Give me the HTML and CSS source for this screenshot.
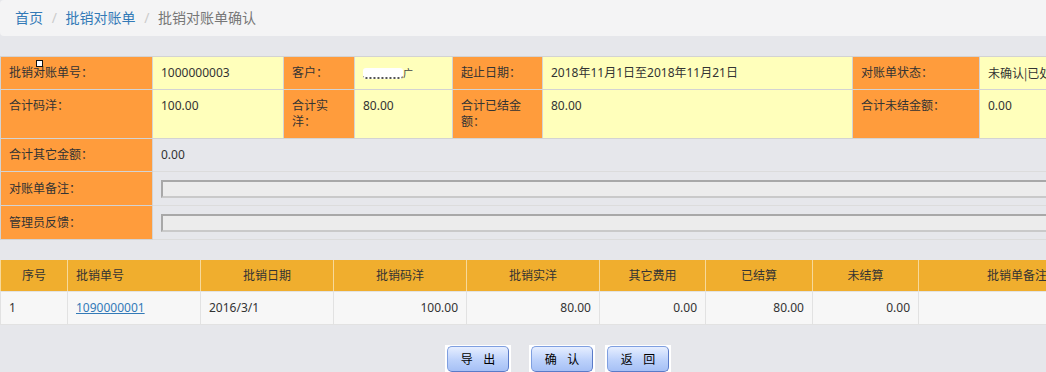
FILE: index.html
```html
<!DOCTYPE html>
<html lang="zh-CN">
<head>
    <meta charset="UTF-8">
    <title>批销对账单确认</title>
    <link rel="stylesheet" href="styles.css">
</head>
<body>
<div class="page">
    <ol class="breadcrumb">
        <li><a href="#">首页</a></li>
        <li><a href="#">批销对账单</a></li>
        <li class="active">批销对账单确认</li>
    </ol>

    <!-- 对账单信息 -->
    <table class="info">
        <colgroup>
            <col style="width: 152px">
            <col style="width: 131px">
            <col style="width: 71px">
            <col style="width: 98px">
            <col style="width: 90px">
            <col style="width: 310px">
            <col style="width: 127px">
            <col>
        </colgroup>
        <tr>
            <td class="label">批销对账单号：<span class="handle"></span></td>
            <td class="value">1000000003</td>
            <td class="label">客户：</td>
            <td class="value"><span class="masked"><i></i>广</span></td>
            <td class="label">起止日期：</td>
            <td class="value">2018年11月1日至2018年11月21日</td>
            <td class="label">对账单状态：</td>
            <td class="value nowrap status">未确认|已处理</td>
        </tr>
        <tr>
            <td class="label">合计码洋：</td>
            <td class="value">100.00</td>
            <td class="label">合计实洋：</td>
            <td class="value">80.00</td>
            <td class="label">合计已结金额：</td>
            <td class="value">80.00</td>
            <td class="label">合计未结金额：</td>
            <td class="value">0.00</td>
        </tr>
        <tr>
            <td class="label">合计其它金额：</td>
            <td class="plain" colspan="7">0.00</td>
        </tr>
        <tr class="input-row">
            <td class="label">对账单备注：</td>
            <td class="plain" colspan="7"><input type="text" class="field" readonly></td>
        </tr>
        <tr class="input-row">
            <td class="label">管理员反馈：</td>
            <td class="plain" colspan="7"><input type="text" class="field" readonly></td>
        </tr>
    </table>

    <!-- 批销单明细 -->
    <table class="list">
        <colgroup>
            <col style="width: 67px">
            <col style="width: 133px">
            <col style="width: 133px">
            <col style="width: 133px">
            <col style="width: 133px">
            <col style="width: 106px">
            <col style="width: 107px">
            <col style="width: 106px">
            <col>
        </colgroup>
        <thead>
            <tr>
                <th>序号</th>
                <th class="left">批销单号</th>
                <th>批销日期</th>
                <th>批销码洋</th>
                <th>批销实洋</th>
                <th>其它费用</th>
                <th>已结算</th>
                <th>未结算</th>
                <th>批销单备注</th>
            </tr>
        </thead>
        <tbody>
            <tr>
                <td>1</td>
                <td><a href="#">1090000001</a></td>
                <td>2016/3/1</td>
                <td class="num">100.00</td>
                <td class="num">80.00</td>
                <td class="num">0.00</td>
                <td class="num">80.00</td>
                <td class="num">0.00</td>
                <td></td>
            </tr>
        </tbody>
    </table>

    <div class="actions">
        <span class="btn"><button type="button">导 出</button></span>
        <span class="btn first-gap"><button type="button">确 认</button></span>
        <span class="btn"><button type="button">返 回</button></span>
    </div>
</div>
</body>
</html>
```

FILE: styles.css
```css
* {
    margin: 0;
    padding: 0;
    box-sizing: border-box;
}

html, body {
    overflow: hidden;
}

body {
    background-color: #e6e7eb;
    font-family: "Noto Sans", "Noto Sans CJK SC", sans-serif;
    font-size: 12px;
    line-height: 16px;
    color: #333;
}

.page {
    width: 1116px;
}

/* 面包屑 */
.breadcrumb {
    list-style: none;
    padding: 8px 15px;
    margin-bottom: 20px;
    background-color: #f4f4f5;
    border-radius: 4px;
    font-size: 14px;
    line-height: 20px;
}

.breadcrumb > li {
    display: inline-block;
}

.breadcrumb > li + li:before {
    padding: 0 5px;
    color: #ccc;
    content: "/\00a0";
}

.breadcrumb a {
    color: #337ab7;
    text-decoration: none;
}

.breadcrumb .active {
    color: #777;
}

/* 信息表 */
table {
    border-collapse: collapse;
    table-layout: fixed;
    width: 1116px;
}

.info td {
    border: 1px solid #d3d3d3;
    padding: 8px;
    vertical-align: top;
}

.info .label {
    background-color: #ff9c3c;
    position: relative;
}

.info .value {
    background-color: #ffffbb;
}

.info .plain {
    border-color: #dcdcdc;
    border-right: none;
}

.info .input-row td {
    padding: 8px 8px 7px;
    height: 34px;
}

.info .input-row .label {
    padding-top: 9px;
}

.nowrap {
    white-space: nowrap;
    overflow: hidden;
}

.status {
    font-family: "Noto Sans CJK SC", sans-serif;
}

.handle {
    position: absolute;
    left: 35px;
    top: 3px;
    width: 7px;
    height: 7px;
    background: #fff;
    border: 1px solid #111;
}

.masked {
    display: inline-flex;
    align-items: center;
    height: 16px;
    font-size: 10px;
    color: #444;
    vertical-align: top;
}

.masked i {
    display: inline-block;
    width: 40px;
    height: 11px;
    background: #fff;
    border-bottom: 2px dotted #555;
    border-radius: 3px;
    filter: blur(0.5px);
}

.field {
    display: block;
    width: 100%;
    height: 18px;
    background-color: #ececec;
    border: 2px solid #c9c9c9;
    border-top-color: #a8a8a8;
    border-left-color: #a8a8a8;
    outline: none;
}

/* 明细表 */
.list {
    margin-top: 20px;
}

.list th,
.list td {
    padding: 8px;
    border: 1px solid #e0e0e0;
    border-top: none;
    text-align: left;
}

.list th {
    background-color: #f0ae2e;
    font-weight: normal;
    text-align: center;
    border-color: #f7d99a;
    border-bottom: 1px solid #e3e3e3;
    padding-bottom: 7px;
}

.list th.left {
    text-align: left;
}

.list td {
    background-color: #f7f7f7;
    border-color: #e2e2e2;
}

.list td.num {
    text-align: right;
}

.list a {
    color: #337ab7;
}

/* 按钮 */
.actions {
    display: flex;
    justify-content: center;
    gap: 10px;
    margin-top: 20px;
}

.first-gap {
    margin-left: 8px;
}

.btn {
    display: inline-block;
    width: 66px;
    height: 28px;
    background: #fff;
    padding: 1px 2px;
}

.btn button {
    display: block;
    width: 62px;
    height: 26px;
    border: 1px solid #7f9fe0;
    border-right-color: #5a7bc8;
    border-bottom-color: #5a7bc8;
    border-radius: 5px;
    background: linear-gradient(#e6eeff, #bcd1fb 55%, #a6c0f5);
    font-family: "Noto Sans CJK SC", sans-serif;
    font-size: 12px;
    line-height: 16px;
    color: #000;
    word-spacing: 8px;
}
```
